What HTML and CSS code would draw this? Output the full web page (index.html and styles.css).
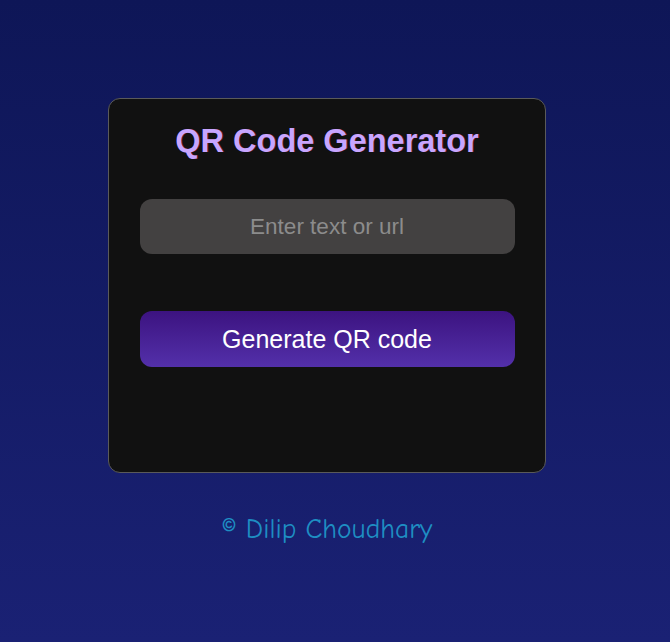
FILE: index.html
```html
<!DOCTYPE html>
<html lang="en">
<head>
<meta charset="utf-8">
<title>QR Code Generator</title>
<link rel="stylesheet" href="styles.css">
</head>
<body>
<main class="page">
  <section class="card">
    <h1 class="title">QR Code Generator</h1>
    <input class="field" type="text" placeholder="Enter text or url">
    <button class="btn" type="button">Generate QR code</button>
  </section>
  <footer class="footer">© Dilip Choudhary</footer>
</main>
</body>
</html>
```
FILE: styles.css
```css
html, body {
  margin: 0;
  height: 100%;
}
body {
  background: linear-gradient(to bottom, #0e1657 0%, #1a2174 100%);
  font-family: "Liberation Sans", Arial, sans-serif;
}
.page {
  display: flex;
  flex-direction: column;
  align-items: center;
  padding: 98px 16px 0 0;
  box-sizing: border-box;
  min-height: 100%;
}
.card {
  width: 438px;
  height: 375px;
  box-sizing: border-box;
  background: #111111;
  border: 1px solid #5a5a5a;
  border-radius: 12px;
  display: flex;
  flex-direction: column;
  align-items: center;
  padding: 23px 31px 0;
}
.title {
  margin: 0;
  font-size: 32.5px;
  font-weight: bold;
  color: #c7a6ff;
  text-shadow: 0.6px 0.4px 0 rgba(160, 20, 40, 0.7);
  line-height: 38px;
}
.field {
  margin-top: 39px;
  width: 375px;
  height: 55px;
  box-sizing: border-box;
  border: none;
  outline: none;
  border-radius: 12px;
  background: #434141;
  color: #ddd;
  font-family: "Liberation Sans", Arial, sans-serif;
  font-size: 22.5px;
  text-align: center;
}
.field::placeholder {
  color: #8c8c8c;
}
.btn {
  margin-top: 57px;
  width: 375px;
  height: 56px;
  border: none;
  border-radius: 12px;
  background: linear-gradient(to bottom, #3c1380 0%, #5330aa 100%);
  color: #ffffff;
  font-family: "Liberation Sans", Arial, sans-serif;
  font-size: 25px;
}
.footer {
  margin-top: 40px;
  font-family: "Comic Sans MS", "Comic Neue", cursive;
  font-size: 27.5px;
  color: #1e8ec3;
}
```
